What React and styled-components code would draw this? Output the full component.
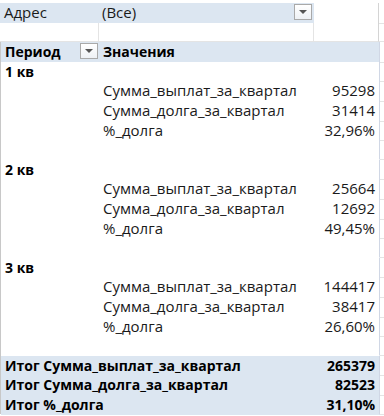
import React from 'react';
import styled, { createGlobalStyle } from 'styled-components';

const GlobalStyle = createGlobalStyle`
  html, body { margin: 0; padding: 0; background: #ffffff; }
  body {
    font-family: "Open Sans", "Liberation Sans", sans-serif;
    font-size: 15px;
    color: #111;
  }
`;

const COLS = '99px 215px 65px 1fr';
const ROW_H = '19.6px';

const Sheet = styled.div`
  width: 384px;
  height: 416px;
  padding-top: 3px;
  box-sizing: border-box;
  overflow: hidden;
  background: #fff;
`;

const Row = styled.div`
  display: grid;
  grid-template-columns: ${COLS};
  height: ${ROW_H};
  line-height: ${ROW_H};
  box-sizing: border-box;
  font-weight: ${p => (p.$bold ? 700 : 400)};
  font-size: ${p => (p.$bold ? '14px' : '15px')};
  color: ${p => (p.$bold ? '#000' : '#1a1a1a')};
`;

const Cell = styled.div`
  position: relative;
  grid-column: ${p => (p.$span ? `span ${p.$span}` : 'auto')};
  padding: 0 4px 0 ${p => (p.$indent ? '3px' : '4px')};
  white-space: nowrap;
  overflow: visible;
  text-align: ${p => (p.$right ? 'right' : 'left')};
  background: ${p => (p.$fill ? '#dce6f1' : '#fff')};
  border-right: 1px solid ${p => p.$grid || 'transparent'};
  border-bottom: 1px solid ${p => p.$line || 'transparent'};
  box-sizing: border-box;
`;

const Outside = styled.div`
  border-bottom: 1px solid #e4e4e4;
  box-sizing: border-box;
`;

const DropButton = styled.span`
  position: absolute;
  right: 1px;
  top: 1px;
  width: 18px;
  height: 16px;
  box-sizing: border-box;
  border: 1px solid #a9a9a9;
  background: linear-gradient(#ffffff, #eef1f5);
  display: flex;
  align-items: center;
  justify-content: center;
  &::after {
    content: '';
    border-left: 4px solid transparent;
    border-right: 4px solid transparent;
    border-top: 4px solid #555;
  }
`;

const DataArea = styled.div`
  border-left: 1px solid #c8c8c8;
`;

const groups = [
  { name: '1 кв', values: ['95298', '31414', '32,96%'] },
  { name: '2 кв', values: ['25664', '12692', '49,45%'] },
  { name: '3 кв', values: ['144417', '38417', '26,60%'] },
];

const measures = ['Сумма_выплат_за_квартал', 'Сумма_долга_за_квартал', '%_долга'];

const totals = [
  ['Итог Сумма_выплат_за_квартал', '265379'],
  ['Итог Сумма_долга_за_квартал', '82523'],
  ['Итог %_долга', '31,10%'],
];

function Group({ group }) {
  return (
    <>
      <Row $bold>
        <Cell $line="#b8cce4">{group.name}</Cell>
        <Cell $line="#b8cce4" />
        <Cell $line="#b8cce4" $grid="#d0d7e5" />
        <Outside />
      </Row>
      {measures.map((m, i) => (
        <Row key={m}>
          <Cell />
          <Cell $indent>{m}</Cell>
          <Cell $right $grid="#d0d7e5">{group.values[i]}</Cell>
          <Outside />
        </Row>
      ))}
      <Row>
        <Cell />
        <Cell />
        <Cell $grid="#d0d7e5" />
        <Outside />
      </Row>
    </>
  );
}

export default function App() {
  return (
    <>
      <GlobalStyle />
      <Sheet>
        <Row>
          <Cell $fill>Адрес</Cell>
          <Cell $fill $indent>
            (Все)
            <DropButton />
          </Cell>
          <Cell $grid="#d4d4d4" $line="#e4e4e4" />
          <Outside />
        </Row>
        <Row>
          <Cell $grid="#e4e4e4" $line="#e4e4e4" />
          <Cell $grid="#e4e4e4" $line="#e4e4e4" />
          <Cell $grid="#d4d4d4" $line="#e4e4e4" />
          <Outside />
        </Row>
        <DataArea>
          <Row $bold>
            <Cell $fill $line="#95b3d7">
              Период
              <DropButton />
            </Cell>
            <Cell $fill $indent $line="#95b3d7">Значения</Cell>
            <Cell $fill $line="#95b3d7" $grid="#d0d7e5" />
            <Outside />
          </Row>
          {groups.map(g => (
            <Group key={g.name} group={g} />
          ))}
          {totals.map(([label, value]) => (
            <Row $bold key={label}>
              <Cell $fill $span={2}>{label}</Cell>
              <Cell $fill $right $grid="#d0d7e5">{value}</Cell>
              <Outside />
            </Row>
          ))}
        </DataArea>
      </Sheet>
    </>
  );
}
